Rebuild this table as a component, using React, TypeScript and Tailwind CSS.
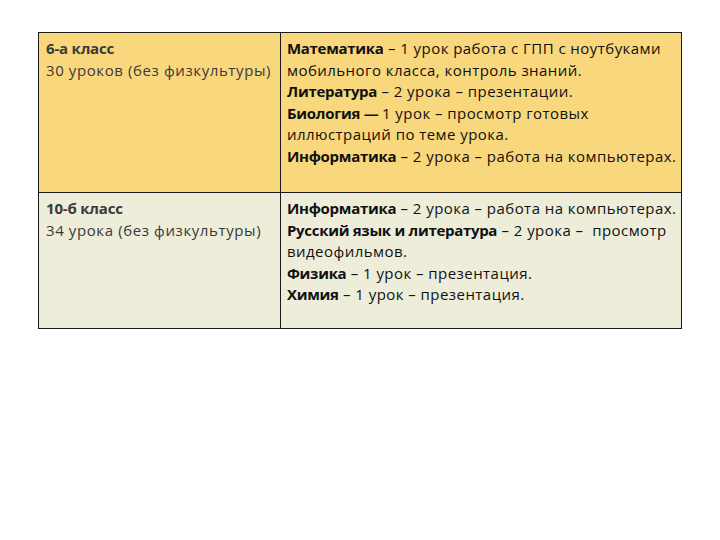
import React from 'react';

type Line = { b?: string; t: string };

const rows: { bg: string; h: string; title: string; sub: string; lines: Line[][] }[] = [
  {
    bg: 'bg-[#f9d77d]',
    h: 'h-[159px]',
    title: '6-а класс',
    sub: '30 уроков (без физкультуры)',
    lines: [
      [{ b: 'Математика', t: ' – 1 урок работа с ГПП с ноутбуками' }],
      [{ t: 'мобильного класса, контроль знаний.' }],
      [{ b: 'Литература', t: ' – 2 урока – презентации.' }],
      [{ b: 'Биология — ', t: '1 урок – просмотр готовых' }],
      [{ t: 'иллюстраций по теме урока.' }],
      [{ b: 'Информатика', t: ' – 2 урока – работа на компьютерах.' }],
    ],
  },
  {
    bg: 'bg-[#ededda]',
    h: 'h-[136px]',
    title: '10-б класс',
    sub: '34 урока (без физкультуры)',
    lines: [
      [{ b: 'Информатика', t: ' – 2 урока – работа на компьютерах.' }],
      [{ b: 'Русский язык и литература', t: ' – 2 урока –  просмотр' }],
      [{ t: 'видеофильмов.' }],
      [{ b: 'Физика', t: ' – 1 урок – презентация.' }],
      [{ b: 'Химия', t: ' – 1 урок – презентация.' }],
    ],
  },
];

export default function App() {
  return (
    <div className="w-[720px] h-[540px] bg-white pt-[32px] pl-[38px]" style={{ fontFamily: '"Open Sans", Lato, sans-serif' }}>
      <div className="w-[644px] border-[1.5px] border-[#1a1a1a] text-[15px] leading-[21.6px]">
        {rows.map((r, i) => (
          <div key={i} className={`flex ${r.h} ${r.bg} ${i > 0 ? 'border-t-[1.5px] border-[#1a1a1a]' : ''}`}>
            <div className="w-[242px] shrink-0 border-r-[1.5px] border-[#1a1a1a] px-[7px] pt-[5px] text-[#3a3a3a] tracking-[0.6px]">
              <div className="font-bold tracking-[-0.2px]">{r.title}</div>
              <div>{r.sub}</div>
            </div>
            <div className="flex-1 px-[6px] pt-[5px] text-[#111] tracking-[0.45px]">
              {r.lines.map((ln, j) => (
                <div key={j} className="whitespace-pre">
                  {ln.map((s, k) => (
                    <span key={k}>
                      {s.b && <span className="font-bold tracking-[-0.3px]">{s.b}</span>}
                      {s.t}
                    </span>
                  ))}
                </div>
              ))}
            </div>
          </div>
        ))}
      </div>
    </div>
  );
}
